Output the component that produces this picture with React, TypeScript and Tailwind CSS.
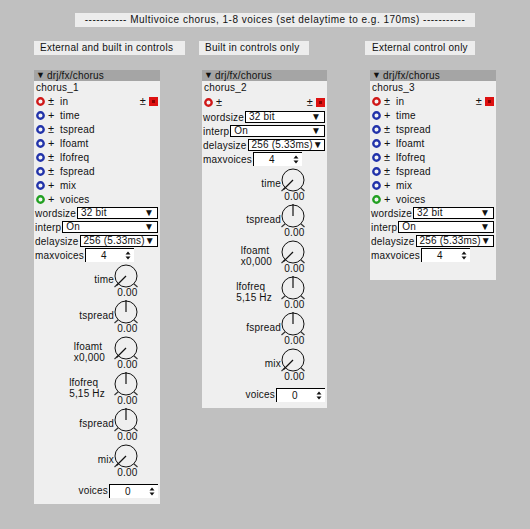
import React from 'react'

type InletKind = 'audio' | 'frac' | 'int'

interface Inlet {
  name: string
  kind: InletKind
  sign: '±' | '+'
}

interface Knob {
  label: string[]
  pointer: 'min' | 'mid'
}

const inlets: Inlet[] = [
  { name: 'time', kind: 'frac', sign: '+' },
  { name: 'tspread', kind: 'frac', sign: '±' },
  { name: 'lfoamt', kind: 'frac', sign: '+' },
  { name: 'lfofreq', kind: 'frac', sign: '±' },
  { name: 'fspread', kind: 'frac', sign: '±' },
  { name: 'mix', kind: 'frac', sign: '+' },
  { name: 'voices', kind: 'int', sign: '+' },
]

const knobs: Knob[] = [
  { label: ['time'], pointer: 'min' },
  { label: ['tspread'], pointer: 'mid' },
  { label: ['lfoamt', 'x0,000'], pointer: 'min' },
  { label: ['lfofreq', '5,15 Hz'], pointer: 'mid' },
  { label: ['fspread'], pointer: 'mid' },
  { label: ['mix'], pointer: 'min' },
]

const ringColor: Record<InletKind, string> = {
  audio: '#d01818',
  frac: '#2233aa',
  int: '#22a022',
}

const Ring = ({ kind }: { kind: InletKind }) => (
  <svg width="9" height="9" viewBox="0 0 9 9" className="shrink-0">
    <circle cx="4.5" cy="4.5" r="3.2" fill="#f4f4f4" stroke={ringColor[kind]} strokeWidth="2.4" />
  </svg>
)

const Outlet = () => (
  <svg width="9" height="9" viewBox="0 0 9 9" className="shrink-0">
    <rect x="0" y="0" width="9" height="9" fill="#dd1111" />
    <rect x="3" y="3" width="3" height="3" fill="#8a0000" />
  </svg>
)

const Arrows = () => (
  <svg width="6" height="9" viewBox="0 0 6 9">
    <path d="M0.5 3.5 L3 0.5 L5.5 3.5 Z" fill="#111" />
    <path d="M0.5 5.5 L3 8.5 L5.5 5.5 Z" fill="#111" />
  </svg>
)

const Dropdown = ({ label, value }: { label: string; value: string }) => (
  <div className="flex items-center h-[14px] pl-[1px] pr-[2px]">
    <span className="whitespace-nowrap">{label}</span>
    <div className="ml-[1px] flex-1 min-w-0 h-[12px] bg-white border border-black flex items-center justify-between pl-[3px] pr-[3px] leading-[10px] whitespace-nowrap overflow-hidden">
      <span>{value}</span>
      <span className="text-[10px] tracking-normal">▼</span>
    </div>
  </div>
)

const Spinner = ({ value }: { value: string }) => (
  <div className="w-[49px] h-[14px] bg-white border-l border-t border-black flex items-center justify-between pl-[15px] pr-[3px]">
    <span>{value}</span>
    <Arrows />
  </div>
)

const Dial = ({ pointer }: { pointer: 'min' | 'mid' }) => (
  <svg width="30" height="26" viewBox="0 0 30 26">
    <circle cx="15" cy="14" r="11" fill="none" stroke="#111" strokeWidth="1" />
    <line x1="7.2" y1="21.8" x2="3.5" y2="25" stroke="#333" strokeWidth="1.2" />
    <line x1="22.8" y1="21.8" x2="26.5" y2="25" stroke="#333" strokeWidth="1.2" />
    {pointer === 'min' ? (
      <line x1="15" y1="14" x2="5.5" y2="23.5" stroke="#111" strokeWidth="1.2" />
    ) : (
      <line x1="15" y1="14" x2="15" y2="2" stroke="#111" strokeWidth="1.2" />
    )}
  </svg>
)

const KnobRow = ({ knob }: { knob: Knob }) => {
  const twoLine = knob.label.length > 1
  return (
    <div className="flex justify-end h-[36px] pr-[19px]">
      {twoLine ? (
        <div className="mt-[7px] mr-[6px] leading-[11px]">
          {knob.label.map((l) => (
            <div key={l}>{l}</div>
          ))}
        </div>
      ) : (
        <div className="mt-[12px] -mr-[3px] leading-[11px] relative z-10">{knob.label[0]}</div>
      )}
      <div className="w-[30px] flex flex-col items-center">
        <Dial pointer={knob.pointer} />
        <div className="leading-[10px] h-[10px] pl-[3px]">0.00</div>
      </div>
    </div>
  )
}

interface ChorusProps {
  name: string
  left: number
  width: number
  showInlets: boolean
  showKnobs: boolean
}

const Chorus = ({ name, left, width, showInlets, showKnobs }: ChorusProps) => (
  <div className="absolute top-[70px] bg-[#efefef]" style={{ left, width }}>
    {/* header */}
    <div className="h-[11px] bg-[#a5a5a5] flex items-center pl-[2px] leading-[11px]">
      <span className="text-[9px] mr-[2px] tracking-normal">▼</span>
      <span>drj/fx/chorus</span>
    </div>
    <div className="h-[13px] pl-[2px] leading-[13px]">{name}</div>

    {/* in / out */}
    <div className={`flex items-center pl-[2px] pr-[2px] ${showInlets ? 'h-[14px]' : 'h-[16px]'}`}>
      <Ring kind="audio" />
      <span className="w-[12px] pl-[3px] text-[11px]">±</span>
      {showInlets && <span className="ml-[3px]">in</span>}
      <span className="ml-auto mr-[3px] text-[11px]">±</span>
      <Outlet />
    </div>
    {showInlets &&
      inlets.map((i) => (
        <div key={i.name} className="flex items-center h-[14px] pl-[2px]">
          <Ring kind={i.kind} />
          <span className="w-[12px] pl-[3px] text-[11px]">{i.sign}</span>
          <span className="ml-[3px]">{i.name}</span>
        </div>
      ))}

    {/* attributes */}
    <Dropdown label="wordsize" value="32 bit" />
    <Dropdown label="interp" value="On" />
    <Dropdown label="delaysize" value="256 (5.33ms)" />
    <div className="flex items-center h-[14px] pl-[1px]">
      <span>maxvoices</span>
      <div className="ml-[1px]">
        <Spinner value="4" />
      </div>
    </div>

    {showKnobs ? (
      <>
        {knobs.map((k) => (
          <KnobRow key={k.label[0]} knob={k} />
        ))}
        <div className="flex justify-end items-center pt-[5px] pb-[6px] pr-[2px]">
          <span className="mr-[1px]">voices</span>
          <Spinner value="0" />
        </div>
      </>
    ) : (
      <div className="h-[18px]" />
    )}
  </div>
)

const Comment = ({ text, left, top, width, className = '' }: { text: string; left: number; top: number; width: number; className?: string }) => (
  <div
    className={`absolute h-[14px] bg-[#ededed] leading-[14px] whitespace-nowrap ${className}`}
    style={{ left, top, width }}
  >
    {text}
  </div>
)

export default function App() {
  return (
    <div className="relative w-[530px] h-[529px] bg-[#c0c0c0] overflow-hidden text-[10px] tracking-[0.2px] text-[#111] font-['Liberation_Sans',Arial,sans-serif]">
      <Comment
        text="----------- Multivoice chorus, 1-8 voices (set delaytime to e.g. 170ms) -----------"
        left={75}
        top={13}
        width={400}
        className="text-center tracking-[0.5px]"
      />
      <Comment text="External and built in controls" left={34} top={41} width={151} className="pl-[6px] tracking-[0.25px]" />
      <Comment text="Built in controls only" left={199} top={41} width={110} className="pl-[6px] tracking-[0.25px]" />
      <Comment text="External control only" left={365} top={41} width={110} className="pl-[7px] tracking-[0.25px]" />

      <Chorus name="chorus_1" left={34} width={126} showInlets showKnobs />
      <Chorus name="chorus_2" left={202} width={125} showInlets={false} showKnobs />
      <Chorus name="chorus_3" left={370} width={126} showInlets showKnobs={false} />
    </div>
  )
}
